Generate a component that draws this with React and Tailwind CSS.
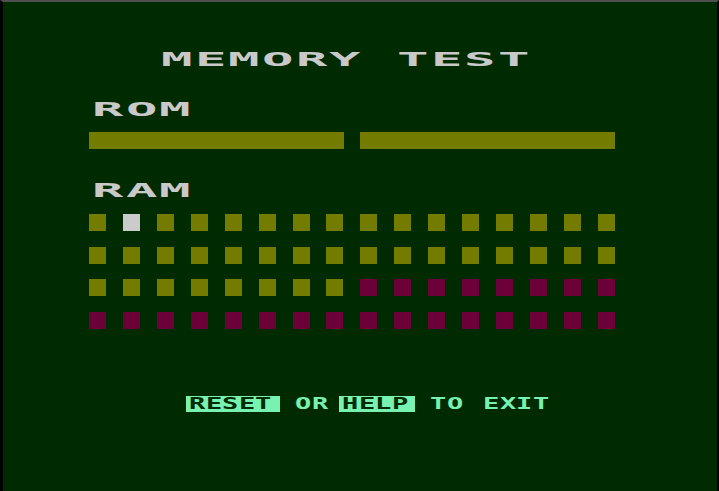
import React from 'react';

// Atari-style memory test screen
const rows = [
  'OWOOOOOOOOOOOOOO',
  'OOOOOOOOOOOOOOOO',
  'OOOOOOOOMMMMMMMM',
  'MMMMMMMMMMMMMMMM',
];

const cellColor = {
  O: 'bg-[#747c00]',
  W: 'bg-[#cbcbcb]',
  M: 'bg-[#6c0038]',
};

function Wide({ text }) {
  return (
    <div className="flex h-[19px] text-[19px] leading-[19px] text-[#c9c9c9]">
      {text.split('').map((c, i) => (
        <span key={i} className="inline-block w-[33.7px] shrink-0">
          <span className="inline-block origin-left scale-x-[2.75]">{c === ' ' ? '\u00a0' : c}</span>
        </span>
      ))}
    </div>
  );
}

function Small({ text }) {
  return (
    <span className="flex">
      {text.split('').map((c, i) => (
        <span key={i} className="inline-block w-[16.5px] shrink-0">
          <span className="inline-block origin-left scale-x-[1.8]">{c}</span>
        </span>
      ))}
    </span>
  );
}

export default function App() {
  return (
    <div className="w-[719px] h-[491px] overflow-hidden bg-[#002a00] border-t-2 border-t-[#505050] border-l-[3px] border-l-black border-r-2 border-r-black font-['DejaVu_Sans_Mono',monospace] font-bold">
      <div className="pl-[86px]">
        {/* Title */}
        <div className="mt-[48px] ml-[72px]">
          <Wide text="MEMORY TEST" />
        </div>

        {/* ROM */}
        <div className="mt-[31px] ml-[3px]">
          <Wide text="ROM" />
        </div>
        <div className="mt-[13px] flex gap-[16px]">
          <div className="h-[17px] w-[255px] bg-[#747c00]" />
          <div className="h-[17px] w-[255px] bg-[#747c00]" />
        </div>

        {/* RAM */}
        <div className="mt-[32px] ml-[3px]">
          <Wide text="RAM" />
        </div>
        <div className="mt-[14px] grid grid-cols-[repeat(16,17px)] gap-x-[16.93px] gap-y-[15.67px]">
          {rows.map((r, ri) =>
            r.split('').map((c, ci) => (
              <div key={`${ri}-${ci}`} className={`h-[17px] w-[17px] ${cellColor[c]}`} />
            ))
          )}
        </div>

        {/* Footer */}
        <div className="mt-[67px] ml-[97px] flex h-[16px] items-center text-[15px] leading-[16px] text-[#78f2b0]">
          <span className="flex h-[16px] w-[94px] pl-[3px] bg-[#78f2b0] text-[#002a00]">
            <Small text="RESET" />
          </span>
          <span className="ml-[15px]">
            <Small text="OR" />
          </span>
          <span className="ml-[11px] flex h-[16px] w-[76px] pl-[3px] bg-[#78f2b0] text-[#002a00]">
            <Small text="HELP" />
          </span>
          <span className="ml-[15px]">
            <Small text="TO" />
          </span>
          <span className="ml-[20px]">
            <Small text="EXIT" />
          </span>
        </div>
      </div>
    </div>
  );
}
